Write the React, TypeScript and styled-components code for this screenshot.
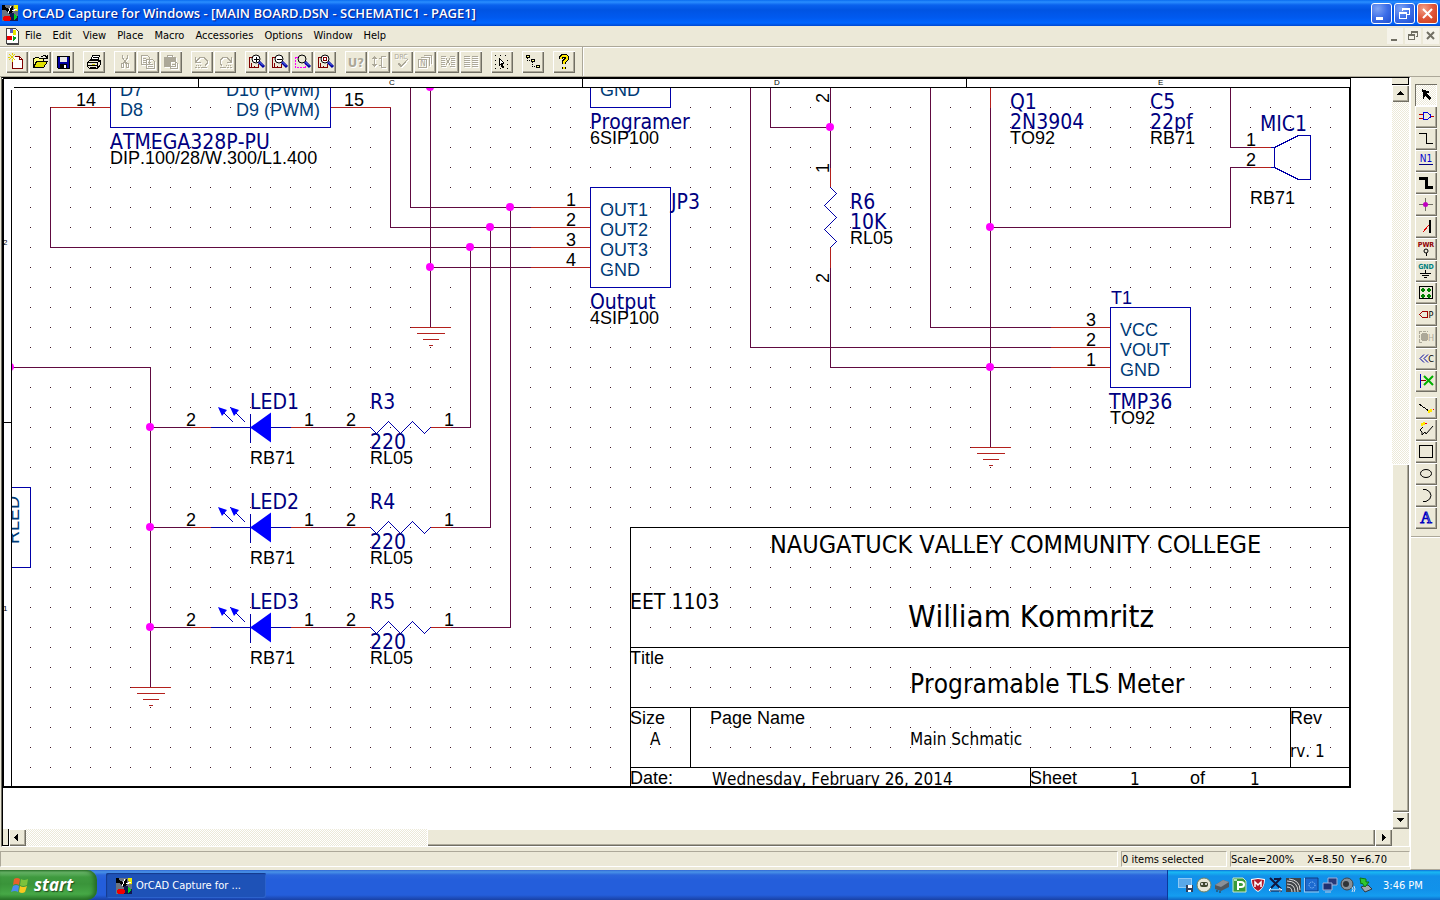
import React from "react";
import styled, { createGlobalStyle } from "styled-components";

const face = "#ece9d8";
const shade = "#aca899";
const dark = "#716f64";
const ui = `"DejaVu Sans Condensed", "DejaVu Sans", sans-serif`;
const arial = `"Liberation Sans", Arial, sans-serif`;
const dither = `repeating-conic-gradient(#ffffff 0 25%, ${face} 0 50%) 0 0 / 2px 2px`;

const GlobalStyle = createGlobalStyle`
  *, *::before, *::after { box-sizing: border-box; }
  html, body, #root { height: 100%; margin: 0; }
  body { background: ${face}; font-family: ${ui}; font-size: 11px; color: #000; overflow: hidden; }
  button { font: inherit; color: inherit; margin: 0; padding: 0; border: 0; background: none; }
`;

/* ---------- window frame ---------- */

const Desktop = styled.div`
  display: flex;
  flex-direction: column;
  height: 100vh;
`;

const TitleBar = styled.header`
  flex: none;
  display: flex;
  align-items: center;
  height: 26px;
  padding: 0 2px;
  background: linear-gradient(#0a6cf0 0, #2a8eff 2px, #0a62ee 5px, #0054e3 10px, #005af0 18px, #0066ff 23px, #0048d0 26px);
`;

const TitleText = styled.h1`
  flex: 1;
  margin: 0 0 0 4px;
  font: 600 13px/26px "Open Sans", sans-serif;
  color: #fff;
  text-shadow: 1px 1px 1px #0a1883;
  white-space: nowrap;
`;

const Captions = styled.div`
  display: flex;
  gap: 2px;
`;

const CaptionButton = styled.button<{ $close?: boolean }>`
  width: 21px;
  height: 21px;
  border: 1px solid #fff;
  border-radius: 3px;
  background: ${(p) =>
    p.$close
      ? "radial-gradient(circle at 30% 25%, #f0a088, #e0563a 50%, #c83c18)"
      : "radial-gradient(circle at 30% 25%, #7fa4f4, #3c6ee8 50%, #2050d0)"};
  svg { display: block; }
`;

const MenuBar = styled.nav`
  flex: none;
  display: flex;
  align-items: center;
  height: 20px;
  padding: 0 1px 0 4px;
`;

const Menus = styled.div`
  flex: 1;
  display: flex;
  gap: 11px;
  margin-left: 5px;
`;

const MenuButton = styled.button`
  height: 18px;
  line-height: 18px;
`;

const ChildButton = styled.button`
  width: 16px;
  height: 16px;
  margin-left: 2px;
  background: #f5f3ea;
  svg { display: block; }
`;

const Toolbar = styled.div`
  flex: none;
  display: flex;
  gap: 9px;
  height: 31px;
  padding-left: 6px;
  border-top: 1px solid ${shade};
  border-bottom: 1px solid ${shade};
  box-shadow: inset 0 1px #fff;
`;

const ToolGroup = styled.div`
  display: flex;
  align-items: center;
  gap: 1px;
`;

const ToolbarEnd = styled.div`
  width: 2px;
  margin-left: -2px;
  border-left: 1px solid ${shade};
  background: #fff;
`;

const ToolButton = styled.button<{ $down?: boolean }>`
  width: 22px;
  height: 22px;
  background: ${(p) => (p.$down ? dither : face)};
  box-shadow: ${(p) =>
    p.$down
      ? `inset 1px 1px ${dark}, inset -1px -1px #fff`
      : `inset 1px 1px #fff, inset -1px -1px ${dark}, inset -2px -2px ${shade}`};
  svg { display: block; }
`;

/* ---------- work area ---------- */

const Body = styled.div`
  flex: 1;
  min-height: 0;
  display: flex;
`;

const Left = styled.div`
  flex: 1;
  min-width: 0;
  display: flex;
  flex-direction: column;
`;

const Child = styled.main`
  flex: 1;
  min-height: 0;
  display: grid;
  grid-template-columns: minmax(0, 1fr) 17px;
  grid-template-rows: minmax(0, 1fr) 17px;
  margin-left: 1px;
  border-left: 1px solid ${dark};
  border-top: 1px solid #000;
  border-right: 1px solid #fff;
  border-bottom: 1px solid #fff;
`;

const Sheet = styled.div`
  overflow: hidden;
  background: #fff;
  svg { display: block; }
`;

const VScroll = styled.div`
  display: flex;
  flex-direction: column;
  background: ${dither};
`;

const HScroll = styled.div`
  display: flex;
  background: ${dither};
`;

const Splitter = styled.div<{ $vertical?: boolean }>`
  flex: none;
  ${(p) => (p.$vertical ? "height: 7px; border-bottom: 1px solid #000; border-right: 1px solid #000;" : "width: 7px; border: 1px solid #000; border-top: 0;")}
  background: ${face};
`;

const ScrollButton = styled.button`
  flex: none;
  width: 17px;
  height: 17px;
  background: ${face};
  box-shadow: inset 1px 1px #fff, inset -1px -1px ${dark}, inset -2px -2px ${shade};
  svg { display: block; }
`;

const Track = styled.div`
  flex: 1;
  display: flex;
  flex-direction: inherit;
  justify-content: flex-end;
`;

const Thumb = styled.div<{ $size: string }>`
  flex: 0 0 ${(p) => p.$size};
  background: ${face};
  box-shadow: inset 1px 1px #fff, inset -1px -1px ${dark}, inset -2px -2px ${shade};
`;

const StatusBar = styled.footer`
  flex: none;
  display: flex;
  gap: 3px;
  height: 23px;
  padding: 4px 0 3px;
`;

const Pane = styled.div<{ $width?: number }>`
  flex: ${(p) => (p.$width ? `0 0 ${p.$width}px` : "1")};
  display: flex;
  gap: 13px;
  line-height: 15px;
  white-space: pre;
  border: 1px solid;
  border-color: ${shade} #fff #fff ${shade};
`;

const Palette = styled.aside`
  flex: none;
  width: 30px;
  border-left: 1px solid #fff;
  border-bottom: 1px solid ${shade};
`;

const PaletteTools = styled.div`
  display: flex;
  flex-direction: column;
  align-items: center;
  gap: 5px;
  padding: 7px 0;
  border-bottom: 1px solid ${shade};
  box-shadow: 0 1px #fff;
`;

const PaletteGroup = styled.div`
  display: flex;
  flex-direction: column;
`;

/* ---------- taskbar ---------- */

const Taskbar = styled.footer`
  flex: none;
  display: flex;
  height: 30px;
  background: linear-gradient(#3168d5 0, #4993e6 2px, #2b66dc 5px, #245edb 10px, #245edb 25px, #1941a5 30px);
  color: #fff;
`;

const StartButton = styled.button`
  display: flex;
  align-items: center;
  gap: 4px;
  width: 97px;
  padding-left: 10px;
  border-radius: 0 10px 10px 0;
  background: linear-gradient(#2f7a2f 0, #6cb86c 2px, #3f9a3f 7px, #3a943a 14px, #46a846 24px, #2a7a2a 30px);
  box-shadow: inset -3px 0 4px #256a25;
  font: italic 700 17px/28px "Open Sans", sans-serif;
  color: #fff;
  text-shadow: 1px 1px 1px #1f4f1f;
`;

const TaskButton = styled.button`
  display: flex;
  align-items: center;
  gap: 4px;
  width: 160px;
  height: 25px;
  margin: 3px 0 0 9px;
  padding-left: 10px;
  border-radius: 2px;
  background: #1e52b7;
  box-shadow: inset 1px 1px 1px #143a8c, inset -1px -1px #2c62cc;
`;

const Tray = styled.div`
  display: flex;
  align-items: center;
  gap: 2px;
  width: 273px;
  margin-left: auto;
  padding-left: 10px;
  border-left: 1px solid #0a3a9c;
  background: linear-gradient(#0d6fd8 0, #19b9f3 2px, #1290e9 6px, #1192ea 20px, #149df0 26px, #0d6ac8 30px);
  svg { flex: none; display: block; }
`;

const Clock = styled.time`
  margin-left: 7px;
  white-space: nowrap;
`;

/* ---------- icons ---------- */

const Ico = ({ children, size = 22 }: { children: React.ReactNode; size?: number }) => (
  <svg width={size} height={size} viewBox={`0 0 ${size} ${size}`} fill="none" stroke="#000" shapeRendering="crispEdges" aria-hidden="true">
    {children}
  </svg>
);

const Off = ({ d, extra }: { d: string; extra?: (c: string) => React.ReactNode }) => (
  <Ico>
    <g stroke="#fff" transform="translate(1 1)"><path d={d} />{extra?.("#fff")}</g>
    <g stroke={shade}><path d={d} />{extra?.(shade)}</g>
  </Ico>
);

const IconText = ({ x, y, c, size = 8, bold, children }: { x: number; y: number; c: string; size?: number; bold?: boolean; children: string }) => (
  <text x={x} y={y} fill={c} stroke="none" fontFamily={ui} fontWeight={bold ? 700 : 400} fontSize={size} textAnchor="middle">{children}</text>
);

const Lens = ({ mark, area }: { mark: React.ReactNode; area?: boolean }) => (
  <Ico>
    {area ? (
      <path d="M4.500 6.500h10v10h-10z" stroke="#f0f" strokeDasharray="2 1" />
    ) : (
      <path d="M7 6.500h-2.500v10h2v-5M6 16.500h7.500v-4M9.500 14.500v2" stroke="#800000" />
    )}
    <circle cx="11" cy="8" r="4" fill={area ? face : "#fff"} shapeRendering="auto" />
    {mark}
    <path d="M14 11l5 5" stroke="#0000a0" strokeWidth="3" shapeRendering="auto" />
    <path d="M14.500 11l3.500 3.500" stroke="#6a8cff" shapeRendering="auto" />
  </Ico>
);

const icons = {
  New: (
    <Ico>
      <path d="M8.500 5.500h5l3 3v9h-10v-7" fill="#fff" stroke="#800000" />
      <path d="M13.500 5v3.500h3" stroke="#800000" />
      <path d="M3 3l6 6M9 3l-6 6M6 2v2M6 8v3M2 6h2" stroke="#e0d000" />
    </Ico>
  ),
  Open: (
    <Ico>
      <path d="M4.500 16v-8.500h1l1-1h3l1 1h4v3" fill="#ffff80" />
      <path d="M4.500 16.500l3-6h11l-4 6z" fill="#e0e000" />
      <path d="M12 5.500h1.500M14 4.500h2l1 1v2M15 7.500h3.500M18.500 4v4" />
    </Ico>
  ),
  Save: (
    <Ico>
      <path d="M5.500 5.500h12v12h-11l-1-1z" fill="#0000a0" />
      <path d="M8 6h7v5h-7z" fill="#e8e8e8" stroke="none" />
      <path d="M8 13h7v4h-7z" fill="#000" stroke="none" />
      <path d="M12 14h2v3h-2z" fill="#fff" stroke="none" />
    </Ico>
  ),
  Print: (
    <Ico>
      <path d="M7.500 10l2-5.500h7l-2 5.500z" fill="#fff" />
      <path d="M10 6.500h5M9 8.500h5" />
      <path d="M4.500 11.500l2-2h11v4l-3 4h-8l-2-2z" fill={face} />
      <path d="M4.500 11.500h10v5M14.500 11.500l3-2M5 14.500h9M7 16.500h6" />
      <path d="M9 13.500h3" stroke="#c8c800" />
    </Ico>
  ),
  Cut: <Off d="M8.500 4v3l4 5M13.500 4v3l-4 5M7.500 12.500h2v4h-2zM12.500 12.500h2v4h-2zM11 9v4" />,
  Copy: <Off d="M4.500 4.500h6l2 2v7h-8zM6 7.500h3M6 9.500h4M6 11.500h4M9.500 8.500h6l2 2v7h-8zM11 11.500h3M11 13.500h5M11 15.500h5" />,
  Paste: <Off d="M4.500 6.500h11v9h-11zM5 7.500h10M5 8.500h10M5 9.500h10M5 10.500h5M5 11.500h5M5 12.500h5M5 13.500h5M5 14.500h5M7.500 4.500h5v2h-5zM10.500 10.500h5l2 2v5h-7zM12 13.500h4M12 15.500h4" />,
  Undo: <Off d="M4.500 6v5.500h5M5 10.500l4-4h4l3 3v3l-2 2M5 14.500h1M7 14.500h1M9 14.500h1M4 16.500h2M7 16.500h2M10 16.500h6" />,
  Redo: <Off d="M17.500 6v5.500h-5M17 10.500l-4-4h-4l-3 3v3l2 2M12 14.500h1M14 14.500h1M16 14.500h1M6 16.500h6M13 16.500h2M16 16.500h2" />,
  "Zoom in": <Lens mark={<path d="M9 8h5M11 5.500v5" />} />,
  "Zoom out": <Lens mark={<path d="M9 8h5" />} />,
  "Zoom area": <Lens area mark={null} />,
  "Zoom all": <Lens mark={<path d="M9.500 6.500h3v3h-3z" stroke="#800000" />} />,
  Annotate: <Off d="" extra={(c) => <IconText bold x={11} y={16} c={c} size={13}>U?</IconText>} />,
  "Back annotate": <Off d="M6.500 5v11M4 7.500h5M5 6.500h3M4 13.500h5M5 14.500h3M18 5.500h-4.500v11h4.500M11 7.500h2M11 14.500h2" />,
  "Design rules check": <Off d="M7 12l3 4 7-8M8 12l3 3 6-7" extra={(c) => <IconText x={10} y={8} c={c} size={7}>DRC</IconText>} />,
  "Create netlist": <Off d="M4.500 8.500h8v8h-8zM7 6.500h8v8M10 4.500h7v8" extra={(c) => <IconText x={9} y={15} c={c} size={8}>N</IconText>} />,
  "Cross reference": <Off d="M4 5.500h5M13 5.500h5M4 7.500h4M14 7.500h4M4 9.500h4M14 9.500h4M4 11.500h4M14 11.500h4M4 13.500h4M14 13.500h4M4 15.500h5M13 15.500h5M9 7l4 7M13 7l-4 7" />,
  "Bill of materials": <Off d="M4 5.500h6M12 5.500h6M4 7.500h6M12 7.500h6M4 9.500h6M12 9.500h6M4 11.500h6M12 11.500h6M4 13.500h6M12 13.500h6M4 15.500h6M12 15.500h6" />,
  "Snap to grid": (
    <Ico>
      <path d="M4 4.500h1M9 4.500h1M14 4.500h1M4 9.500h1M16 9.500h1M4 13.500h1M16 13.500h1M4 17.500h1M9 17.500h1M16 17.500h1" />
      <path d="M8.500 7.500l4 4v1h-2l2 4h-1l-2-3-1 1z" fill="#fff" />
    </Ico>
  ),
  "Project manager": (
    <Ico>
      <path d="M4.500 4.500h3v2h-3zM9.500 8.500h3v2h-3zM14.500 14.500h3v2h-3z" fill="#ffff80" />
      <path d="M5.500 7v2.500h4M10.500 11v4.500h4" strokeDasharray="1 1" />
    </Ico>
  ),
  "Help topics": (
    <Ico>
      <path d="M8 8v-1.500l2-2h2.500l1.500 1.500v2l-3 2.500v2.500M11 15.500v2" strokeWidth="4" />
      <path d="M8 8v-1.500l2-2h2.500l1.500 1.500v2l-3 2.500v2.500M11 15.500v2" stroke="#ffe800" strokeWidth="2" />
    </Ico>
  ),
};

const toolGroups: (keyof typeof icons)[][] = [
  ["New", "Open", "Save"],
  ["Print"],
  ["Cut", "Copy", "Paste"],
  ["Undo", "Redo"],
  ["Zoom in", "Zoom out", "Zoom area", "Zoom all"],
  ["Annotate", "Back annotate", "Design rules check", "Create netlist", "Cross reference", "Bill of materials"],
  ["Snap to grid"],
  ["Project manager"],
  ["Help topics"],
];

const paletteGroups: [string, React.ReactNode][][] = [
  [
    ["Select", <path d="M7 5l8 3-3 1.500 4.500 4.500-2 2-4.500-4.500-1.500 3z" fill="#000" stroke="none" />],
    ["Part", <><path d="M8.500 6.500h4l3 2.500v2l-3 2.500h-4z" stroke="#0000e0" /><path d="M4 8.500h4M4 12.500h4M16 10.500h3" stroke="#c00000" /></>],
    ["Wire", <path d="M4 5.500h7.500v10h6.500" />],
    ["Net alias", <><IconText x={11} y={12} c="#0000d0" size={10}>N1</IconText><path d="M4 14.500h14" stroke="#000080" /></>],
    ["Bus", <path d="M4 6.500h7v9h7" strokeWidth="3" />],
    ["Junction", <><path d="M4 10.500h14M10.500 4v13" stroke={dark} /><circle cx="10.500" cy="10.500" r="2.500" fill="#c000c0" stroke="none" shapeRendering="auto" /></>],
    ["Bus entry", <><path d="M8 16l6-7" stroke="#e00000" /><path d="M15 4v13" strokeWidth="2" /></>],
    ["Power", <><IconText bold x={11} y={9} c="#900000" size={7}>PWR</IconText><circle cx="11" cy="13" r="2" shapeRendering="auto" /><path d="M11 15v3" /></>],
    ["Ground", <><IconText bold x={11} y={9} c="#008080" size={7}>GND</IconText><path d="M10.500 10v4M5 13.500h11M7 15.500h7M9 17.500h3" /></>],
    ["Hierarchical block", <><path d="M4.500 4.500h13v12h-13z" /><path d="M6 8h4M12 8h4M6 14h4M12 14h4M8 6v4M14 6v4M8 12v4M14 12v4" stroke="#008000" strokeWidth="2" /></>],
    ["Port", <><path d="M12.500 7.500h-5l-3 3 3 3h5z" stroke="#a00000" /><IconText x={16} y={14} c="#000" size={9}>P</IconText></>],
    ["Pin", <g><path d="M4 5.500h9M4.500 5v12M4 16.500h3" stroke={shade} strokeDasharray="3 1" /><circle cx="9.500" cy="11" r="3.500" fill={shade} stroke={shade} /><IconText x={16} y={15} c={shade} size={9}>H</IconText></g>],
    ["Off-page connector", <><path d="M9 6.500l-4 4 4 4M13 6.500l-4 4 4 4" stroke="#0000a0" shapeRendering="auto" /><IconText x={16} y={14} c="#000" size={9}>C</IconText></>],
    ["No connect", <><path d="M5.500 4v14" stroke="#0000c0" /><path d="M6 10.500h5" stroke="#900000" /><path d="M9 6l9 9M18 6l-9 9" stroke="#00b000" strokeWidth="2" shapeRendering="auto" /></>],
  ],
  [
    ["Line", <><path d="M4 7l10 7" /><path d="M13 15l4-2" stroke="#ffe800" strokeWidth="3" /><path d="M18 12.500h1" stroke="#f00" /></>],
    ["Polyline", <><path d="M8 8l-3 3 2 2v3l3-3 1 2 7-8" shapeRendering="auto" /><path d="M6 6l4-2" stroke="#ffe800" strokeWidth="3" /><path d="M10 4.500h2" stroke="#f00" /></>],
    ["Rectangle", <path d="M4.500 4.500h13v12h-13z" />],
    ["Ellipse", <ellipse cx="11" cy="10.500" rx="5.500" ry="4" shapeRendering="auto" />],
    ["Arc", <path d="M8 4.500h3q5 2 5 6t-5 6h-3" shapeRendering="auto" />],
    ["Text", <text x="11" y="16" fill="#d0d8ff" stroke="#0000c0" strokeWidth="1" fontFamily="Liberation Serif, serif" fontSize="16" textAnchor="middle">A</text>],
  ],
];

const AppIcon = () => (
  <svg width="16" height="16" viewBox="0 0 16 16" shapeRendering="crispEdges" aria-hidden="true">
    <path d="M0 0h16v16H0z" fill="#6b7480" />
    <path d="M0 0h3v2l4 2 3-3h1v6l-3 2-3-2-2-2H0z" fill="#000" />
    <path d="M12 0h4v6h-3z" fill="#e8e800" />
    <path d="M10 6l5-2M9 1l-3 7" stroke="#fff" />
    <path d="M8 8h4v3h4v5H8z" fill="#101850" />
    <path d="M12 9v6l4-3z" fill="#00d020" />
    <path d="M2 11h6v5H2zM1 12h8v3H1z" fill="#f00000" />
  </svg>
);

const DocIcon = () => (
  <svg width="16" height="18" viewBox="0 0 16 18" shapeRendering="crispEdges" aria-hidden="true">
    <path d="M2 1h9l3 3v12H2z" fill="#fff" stroke="#444" />
    <path d="M6 2h3v4H6z" fill="#6060c0" />
    <path d="M9 3h3v5H9z" fill="#e8e800" />
    <path d="M3 9h5v4H3z" fill="#f00000" />
    <path d="M9 9v5l4-3z" fill="#00a020" />
    <path d="M3 17h12M14.500 5v12" stroke="#444" />
  </svg>
);

const Flag = () => (
  <svg width="20" height="18" viewBox="0 0 20 18" aria-hidden="true">
    <path d="M4 3q3-2 6 0l-1 6q-3-2-6 0z" fill="#e8602c" />
    <path d="M11 3q3 2 7 0l-1 6q-4 2-7 0z" fill="#7cc23c" />
    <path d="M3 10q3-2 6 0l-1 6q-3-2-7 0z" fill="#4a8cf0" />
    <path d="M10 10q3 2 7 0l-2 6q-3 2-6 0z" fill="#f8c820" />
  </svg>
);

const trayIcons: React.ReactNode[] = [
  <><path d="M0 1h14v10H0z" fill="#8cc8f4" /><path d="M1 2h12v8H1z" fill="#5aa8e8" /><path d="M8 8h7v7H8z" fill="#30405c" /><path d="M10 8h4v3h-4zM10 13h3v2h-3z" fill="#fff" /></>,
  <><circle cx="8" cy="8" r="7" fill="#e8e8d8" stroke="#708060" /><rect x="4" y="5" width="8" height="5" rx="2" fill="#404830" /><circle cx="6" cy="7" r="1" fill="#fff" /><circle cx="10" cy="7" r="1" fill="#fff" /></>,
  <><path d="M1 8l8-5 6 2v5l-8 4-6-2z" fill="#505860" /><path d="M1 8l8-5 6 2-8 5z" fill="#8a9098" /><path d="M3 13v2M6 14v2" stroke="#333" /></>,
  <><path d="M1 1h10l3 3v11H1z" fill="#3a9a3a" stroke="#c8e8c8" /><path d="M6 13V5h3q3 0 3 2.500T9 10H7" stroke="#fff" strokeWidth="2" fill="none" /><path d="M2 2h3v2H2z" fill="#b0e0b0" /></>,
  <><path d="M1 2l7-1 7 1q0 9-7 13Q1 11 1 2z" fill="#fff" /><path d="M2 3l6-1 6 1q0 8-6 11Q2 11 2 3z" fill="#b01828" /><path d="M5 10V5l3 3 3-3v5" stroke="#fff" strokeWidth="1.500" fill="none" /></>,
  <><path d="M2 1l11 11M13 1L3 11M6 2h6" stroke="#101840" strokeWidth="2" /><path d="M1 13h13M3 11l-2 2 2 2M11 11l3 2-3 2" stroke="#fff" fill="none" /><path d="M2 14h12" stroke="#101840" /></>,
  <><path d="M0 1h15v14H0z" fill="#404448" /><path d="M1 4q11 0 11 11M1 7q8 0 8 8M1 10q5 0 5 5M3 2q11 1 11 11" stroke="#d8d8d8" fill="none" /></>,
  <><path d="M1 1h13v13H1z" fill="#1c6ad0" stroke="#103c80" /><circle cx="8" cy="8" r="3" fill="none" stroke="#a0d0ff" strokeDasharray="1 1" /><path d="M0 15h15M.5 1v14" stroke="#a0c8f0" /></>,
  <><path d="M6 1h9v7H6z" fill="#283878" stroke="#a0b0d8" /><path d="M1 6h9v7H1z" fill="#203070" stroke="#a0b0d8" /><path d="M3 15h6" stroke="#c0c8e0" /></>,
  <><circle cx="7" cy="7" r="6" fill="#889098" stroke="#404448" /><circle cx="6" cy="7" r="3" fill="#303438" /><path d="M12 10q2 2 0 5M14 9q2 3 0 6" stroke="#d0e0f0" fill="none" /></>,
  <><path d="M3 10l7-2 4 4-7 3z" fill="#a0a8b0" stroke="#303840" /><path d="M2 1l6 1v3h3L7 10 4 6 3 7z" fill="#30c830" stroke="#107810" /></>,
];

/* ---------- schematic ---------- */

const wireColor = "#600a40";
const pinColor = "#b4201c";
const partBlue = "#0000a8";

type Label = [x: number, y: number, text: string];

/* Part references and values. */
const refs: Label[] = [
  [110, 149, "ATMEGA328P-PU"], [590, 129, "Programer"], [671, 209, "JP3"], [590, 309, "Output"],
  [850, 209, "R6"], [850, 229, "10K"], [1010, 109, "Q1"], [1010, 129, "2N3904"],
  [1150, 109, "C5"], [1150, 129, "22pf"], [1260, 131, "MIC1"], [1109, 409, "TMP36"],
];

/* Footprints and pin numbers. */
const blacks: Label[] = [
  [110, 164, "DIP.100/28/W.300/L1.400"], [590, 144, "6SIP100"], [590, 324, "4SIP100"], [850, 244, "RL05"],
  [1010, 144, "TO92"], [1150, 144, "RB71"], [1250, 204, "RB71"], [1110, 424, "TO92"],
  [76, 106, "14"], [344, 106, "15"], [566, 206, "1"], [566, 226, "2"], [566, 246, "3"], [566, 266, "4"],
  [1246, 146, "1"], [1246, 166, "2"], [1086, 326, "3"], [1086, 346, "2"], [1086, 366, "1"],
];

const pinNames: Label[] = [
  [120, 96, "D7"], [120, 116, "D8"], [226, 96, "D10 (PWM)"], [236, 116, "D9 (PWM)"], [600, 96, "GND"],
  [600, 216, "OUT1"], [600, 236, "OUT2"], [600, 256, "OUT3"], [600, 276, "GND"],
  [1120, 336, "VCC"], [1120, 356, "VOUT"], [1120, 376, "GND"],
];

const blockCaptions: Label[] = [
  [630, 664, "Title"], [630, 724, "Size"], [710, 724, "Page Name"], [630, 784, "Date:"],
  [1030, 784, "Sheet"], [1190, 784, "of"], [1290, 724, "Rev"],
];

const nodes = [[430, 87], [430, 267], [510, 207], [490, 227], [470, 247], [10, 367], [150, 427], [150, 527], [150, 627], [830, 127], [990, 227], [990, 367]];

const LabelGroup = styled.g`
  font-kerning: none;
`;

const Labels = ({ items, fill, size, font }: { items: Label[]; fill: string; size: number; font: string }) => (
  <LabelGroup fill={fill} fontSize={size} fontFamily={font}>
    {items.map(([x, y, t]) => <text key={`${x},${y}`} x={x} y={y}>{t}</text>)}
  </LabelGroup>
);

const Ground = ({ x, y }: { x: number; y: number }) => (
  <path transform={`translate(${x} ${y})`} d="M-20 0h40M-14 6h28M-8 12h16M-2 18h4" stroke={pinColor} />
);

const LedRow = ({ n, y, end }: { n: number; y: number; end: number }) => (
  <g transform={`translate(0 ${y})`}>
    <g transform="translate(.5 .5)" fill="none" shapeRendering="crispEdges">
      <path d={`M150 0h40M310 0h40M450 0H${end}`} stroke={wireColor} />
      <path d="M190 0h20M290 0h20M350 0h20M430 0h20" stroke={pinColor} />
      <path d="M210 0h40M270 0h20M250-14v29" stroke={partBlue} />
      <path d="M370 0l6 6 12-12 12 12 12-12 12 12 6-6M220-18l13 13M232-18l13 13" stroke={partBlue} />
    </g>
    <path d="M250 .5l21-15v30zM218-20l9 3-5 6zM230-20l9 3-5 6z" fill="#00f" />
    <Labels fill="#000080" size={21} font={ui} items={[[250, -18, `LED${n}`], [370, -18, `R${n + 2}`], [370, 22, "220"]]} />
    <Labels fill="#000" size={18} font={arial} items={[[186, -1, "2"], [304, -1, "1"], [346, -1, "2"], [444, -1, "1"], [250, 37, "RB71"], [370, 37, "RL05"]]} />
  </g>
);

const Schematic = () => (
  <svg width="1389" height="751" viewBox="2 78 1389 751" role="img" aria-label="SCHEMATIC1 PAGE1">
    <defs>
      <pattern id="grid" x="30" y="107" width="20" height="20" patternUnits="userSpaceOnUse">
        <path d="M0 0h1v1H0z" fill="#3c1020" />
      </pattern>
      <clipPath id="page"><path d="M12 88h1338v699H12z" /></clipPath>
    </defs>

    <g clipPath="url(#page)">
      <path d="M12 88h1337v698H12z" fill="url(#grid)" shapeRendering="crispEdges" />
      <g transform="translate(.5 .5)" fill="none" shapeRendering="crispEdges">
        <path
          stroke={wireColor}
          d="M50 107V247H530M390 107V227H530M410 87V207H530M430 87V327M430 267H530M470 247V427M490 227V527M510 207V627
             M12 367H150V687M750 87V347H1050M770 87V127H830M830 87V167M830 267V367H1050M930 87V327H1050M990 107V447
             M1230 87V147H1250M1250 167H1230V227H990"
        />
        <path
          stroke={pinColor}
          d="M50 107H110M330 107H390M530 207H590M530 227H590M530 247H590M530 267H590M830 167V187M830 247V267M990 87V107
             M1050 327H1110M1050 347H1110M1050 367H1110M1250 147H1270M1250 167H1270"
        />
        <path
          stroke={partBlue}
          d="M110 80V127H330V80M590 80V107H670V80M590 187H670V287H590zM1110 307H1190V387H1110zM0 487H30V567H0
             M830 187l6 6-12 12 12 12-12 12 12 12-6 6M1270 147h4l24-12h12v44h-12l-24-12h-4M1274 147v20"
        />
        <Ground x={430} y={327} />
        <Ground x={150} y={687} />
        <Ground x={990} y={447} />
        <path stroke="#000" d="M1350 527H630V787M630 647H1350M630 707H1350M630 767H1350M690 707V767M1290 707V767M1030 767V787" />
      </g>

      <LedRow n={1} y={427} end={470} />
      <LedRow n={2} y={527} end={490} />
      <LedRow n={3} y={627} end={510} />

      <Labels items={refs} fill="#000080" size={21} font={ui} />
      <Labels items={[[1111, 304, "T1"]]} fill="#000080" size={18} font={arial} />
      <Labels items={pinNames} fill="#003c78" size={18} font={arial} />
      <Labels items={blacks} fill="#000" size={18} font={arial} />
      <g fontFamily={arial} fontSize="18">
        <text transform="translate(829 103) rotate(-90)">2</text>
        <text transform="translate(829 173) rotate(-90)">1</text>
        <text transform="translate(829 283) rotate(-90)">2</text>
        <text transform="translate(19 544) rotate(-90)" fill="#003c78">RLED</text>
      </g>

      <Labels items={blockCaptions} fill="#000" size={18} font={arial} />
      <Labels items={[[770, 553, "NAUGATUCK VALLEY COMMUNITY COLLEGE"]]} fill="#000" size={25} font={ui} />
      <Labels items={[[910, 693, "Programable TLS Meter"]]} fill="#000" size={26} font={ui} />
      <Labels items={[[908, 627, "William Kommritz"]]} fill="#000" size={31} font={ui} />
      <Labels items={[[630, 609, "EET 1103"]]} fill="#000" size={21} font={ui} />
      <Labels
        items={[
          [650, 745, "A"], [910, 745, "Main Schmatic"], [712, 785, "Wednesday, February 26, 2014"],
          [1290, 757, "rv. 1"], [1130, 785, "1"], [1250, 785, "1"],
        ]}
        fill="#000"
        size={17}
        font={ui}
      />

      <g fill="#f0f">{nodes.map(([x, y]) => <circle key={`${x},${y}`} cx={x} cy={y} r="4" />)}</g>
    </g>

    <g transform="translate(.5 .5)" fill="none" stroke="#000" shapeRendering="crispEdges">
      <path d="M2 78H1350V87M3 78V787M2 78V829M13 87H1350M11 89V787M2 787H1350M2 786H1350M1349 87V787M1350 87V787" />
      <path d="M198 78V87M582 78V87M966 78V87M3 422H11" />
    </g>
    <g fontFamily={arial} fontSize="8">
      <text x="389" y="85">C</text>
      <text x="774" y="85">D</text>
      <text x="1158" y="85">E</text>
      <text x="3" y="245">2</text>
      <text x="3" y="611">1</text>
    </g>
  </svg>
);

/* ---------- app ---------- */

const Arrow = ({ d }: { d: string }) => (
  <svg width="17" height="17" viewBox="0 0 17 17" shapeRendering="crispEdges" aria-hidden="true"><path d={d} /></svg>
);

export default function App() {
  return (
    <Desktop>
      <GlobalStyle />
      <TitleBar>
        <AppIcon />
        <TitleText>OrCAD Capture for Windows - [MAIN BOARD.DSN - SCHEMATIC1 - PAGE1]</TitleText>
        <Captions>
          <CaptionButton aria-label="Minimize"><Ico size={19}><path d="M4 14h7" stroke="#fff" strokeWidth="3" /></Ico></CaptionButton>
          <CaptionButton aria-label="Restore"><Ico size={19}><path d="M7.500 7V4.500h7v6H12M7 5h8M4.500 8.500h7v6h-7zM4 9h8" stroke="#fff" /></Ico></CaptionButton>
          <CaptionButton $close aria-label="Close"><Ico size={19}><path d="M5 5l9 9M14 5l-9 9" stroke="#fff" strokeWidth="2" shapeRendering="auto" /></Ico></CaptionButton>
        </Captions>
      </TitleBar>

      <MenuBar>
        <DocIcon />
        <Menus>
          {["File", "Edit", "View", "Place", "Macro", "Accessories", "Options", "Window", "Help"].map((m) => (
            <MenuButton key={m}>{m}</MenuButton>
          ))}
        </Menus>
        <ChildButton aria-label="Minimize document"><Ico size={16}><path d="M4 12h6" stroke={dark} strokeWidth="2" /></Ico></ChildButton>
        <ChildButton aria-label="Restore document"><Ico size={16}><path d="M6.500 6V3.500h6v5H11M6 4h7M3.500 6.500h6v5h-6zM3 7h7" stroke={dark} /></Ico></ChildButton>
        <ChildButton aria-label="Close document"><Ico size={16}><path d="M4 4l7 7M11 4l-7 7" stroke={dark} strokeWidth="2" shapeRendering="auto" /></Ico></ChildButton>
      </MenuBar>

      <Toolbar role="toolbar" aria-label="Capture">
        {toolGroups.map((group) => (
          <ToolGroup key={group[0]}>
            {group.map((name) => <ToolButton key={name} aria-label={name}>{icons[name]}</ToolButton>)}
          </ToolGroup>
        ))}
        <ToolbarEnd />
      </Toolbar>

      <Body>
        <Left>
          <Child>
            <Sheet><Schematic /></Sheet>
            <VScroll>
              <Splitter $vertical />
              <ScrollButton aria-label="Scroll up"><Arrow d="M8 6h1v1h1v1h1v1h1v1H5V9h1V8h1V7h1z" /></ScrollButton>
              <Track><Thumb $size="49%" /></Track>
              <ScrollButton aria-label="Scroll down"><Arrow d="M5 6h7v1h-1v1h-1v1H9v1H8V9H7V8H6V7H5z" /></ScrollButton>
            </VScroll>
            <HScroll>
              <Splitter />
              <ScrollButton aria-label="Scroll left"><Arrow d="M9 5v7H8v-1H7v-1H6V9H5V8h1V7h1V6h1V5z" /></ScrollButton>
              <Track><Thumb $size="70.300%" /></Track>
              <ScrollButton aria-label="Scroll right"><Arrow d="M7 5v7h1v-1h1v-1h1V9h1V8h-1V7H9V6H8V5z" /></ScrollButton>
            </HScroll>
          </Child>
          <StatusBar>
            <Pane />
            <Pane $width={106}>0 items selected</Pane>
            <Pane $width={180}><span>Scale=200%</span><span>X=8.50  Y=6.70</span></Pane>
          </StatusBar>
        </Left>
        <Palette>
          <PaletteTools role="toolbar" aria-label="Place">
            {paletteGroups.map((group) => (
              <PaletteGroup key={group[0][0]}>
                {group.map(([name, art]) => (
                  <ToolButton key={name} $down={name === "Select"} aria-label={name}><Ico>{art}</Ico></ToolButton>
                ))}
              </PaletteGroup>
            ))}
          </PaletteTools>
        </Palette>
      </Body>

      <Taskbar>
        <StartButton><Flag />start</StartButton>
        <TaskButton><AppIcon />OrCAD Capture for ...</TaskButton>
        <Tray>
          {trayIcons.map((art, i) => (
            <svg key={i} width="16" height="16" viewBox="0 0 16 16" aria-hidden="true">{art}</svg>
          ))}
          <Clock>3:46 PM</Clock>
        </Tray>
      </Taskbar>
    </Desktop>
  );
}
